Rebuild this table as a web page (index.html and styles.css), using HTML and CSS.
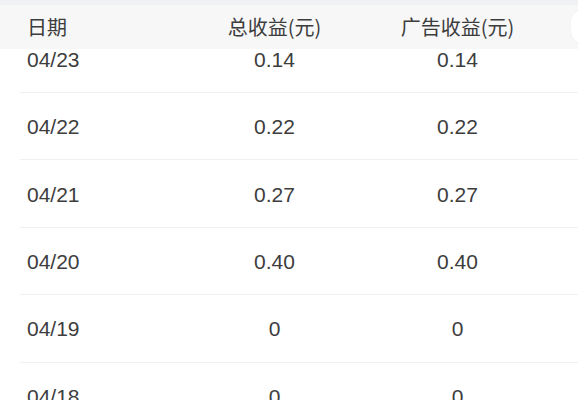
FILE: index.html
```html
<!DOCTYPE html>
<html lang="zh">
<head>
<meta charset="utf-8">
<link rel="stylesheet" href="styles.css">
</head>
<body>
<div class="page">
  <div class="list">
    <div class="row"><span class="c1">04/23</span><span class="c2">0.14</span><span class="c3">0.14</span></div>
    <div class="row"><span class="c1">04/22</span><span class="c2">0.22</span><span class="c3">0.22</span></div>
    <div class="row"><span class="c1">04/21</span><span class="c2">0.27</span><span class="c3">0.27</span></div>
    <div class="row"><span class="c1">04/20</span><span class="c2">0.40</span><span class="c3">0.40</span></div>
    <div class="row"><span class="c1">04/19</span><span class="c2">0</span><span class="c3">0</span></div>
    <div class="row"><span class="c1">04/18</span><span class="c2">0</span><span class="c3">0</span></div>
  </div>
  <div class="header">
    <span class="h1">日期</span><span class="h2">总收益(元)</span><span class="h3">广告收益(元)</span>
  </div>
  <div class="pill"></div>
</div>
</body>
</html>
```
FILE: styles.css
```css
html, body {
  margin: 0;
  padding: 0;
  background: #ffffff;
}
.page {
  position: relative;
  width: 578px;
  height: 400px;
  overflow: hidden;
  font-family: "Liberation Sans", "Noto Sans CJK SC", sans-serif;
  color: #3d3d3d;
}
.list {
  padding-top: 25.6px;
}
.row {
  display: grid;
  grid-template-columns: 163px 183px 183px;
  align-items: center;
  margin-left: 20px;
  height: 66.4px;
  border-bottom: 1px solid #f0f0f0;
  font-size: 21px;
  box-sizing: content-box;
  padding-top: 2px;
  height: 64.4px;
}
.c1 {
  padding-left: 7px;
}
.c2, .c3 {
  text-align: center;
}
.header {
  position: absolute;
  top: 0;
  left: 0;
  right: 0;
  height: 44px;
  border-top: 5px solid #eff1f5;
  background: #f7f7f7;
  display: grid;
  grid-template-columns: 183px 183px 183px;
  align-items: center;
  font-family: "Noto Sans CJK SC", "Liberation Sans", sans-serif;
  font-size: 20px;
  color: #3d3d3d;
}
.h1 {
  padding-left: 27px;
  line-height: 1;
}
.h2, .h3 {
  text-align: center;
  line-height: 1;
}
.pill {
  position: absolute;
  top: 10px;
  left: 571px;
  width: 24px;
  height: 33px;
  border-radius: 14px;
  background: #ffffff;
  box-shadow: 0 0 2px rgba(0,0,0,0.06);
}
```
